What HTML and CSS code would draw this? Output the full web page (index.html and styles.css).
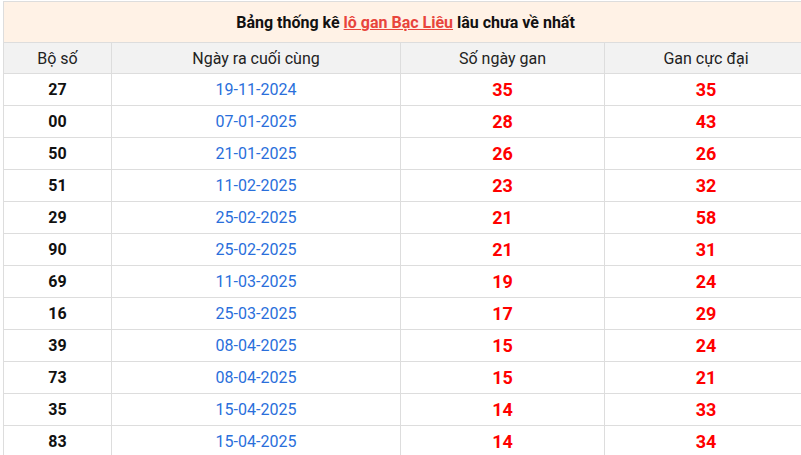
FILE: index.html
```html
<!DOCTYPE html>
<html lang="vi">
<head>
<meta charset="utf-8">
<link rel="stylesheet" href="styles.css">
</head>
<body>
<div class="wrap">
<table class="gan">
  <colgroup>
    <col class="c1"><col class="c2"><col class="c3"><col class="c4">
  </colgroup>
  <thead>
    <tr><th colspan="4" class="title">Bảng thống kê <a href="#" class="lnk">lô gan Bạc Liêu</a> lâu chưa về nhất</th></tr>
    <tr class="head"><th>Bộ số</th><th>Ngày ra cuối cùng</th><th>Số ngày gan</th><th>Gan cực đại</th></tr>
  </thead>
  <tbody>
    <tr><td class="num">27</td><td class="date">19-11-2024</td><td class="red">35</td><td class="red">35</td></tr>
    <tr><td class="num">00</td><td class="date">07-01-2025</td><td class="red">28</td><td class="red">43</td></tr>
    <tr><td class="num">50</td><td class="date">21-01-2025</td><td class="red">26</td><td class="red">26</td></tr>
    <tr><td class="num">51</td><td class="date">11-02-2025</td><td class="red">23</td><td class="red">32</td></tr>
    <tr><td class="num">29</td><td class="date">25-02-2025</td><td class="red">21</td><td class="red">58</td></tr>
    <tr><td class="num">90</td><td class="date">25-02-2025</td><td class="red">21</td><td class="red">31</td></tr>
    <tr><td class="num">69</td><td class="date">11-03-2025</td><td class="red">19</td><td class="red">24</td></tr>
    <tr><td class="num">16</td><td class="date">25-03-2025</td><td class="red">17</td><td class="red">29</td></tr>
    <tr><td class="num">39</td><td class="date">08-04-2025</td><td class="red">15</td><td class="red">24</td></tr>
    <tr><td class="num">73</td><td class="date">08-04-2025</td><td class="red">15</td><td class="red">21</td></tr>
    <tr><td class="num">35</td><td class="date">15-04-2025</td><td class="red">14</td><td class="red">33</td></tr>
    <tr><td class="num">83</td><td class="date">15-04-2025</td><td class="red">14</td><td class="red">34</td></tr>
  </tbody>
</table>
</div>
</body>
</html>
```
FILE: styles.css
```css
html, body {
  margin: 0;
  padding: 0;
  background: #fff;
  overflow: hidden;
}
.wrap {
  width: 801px;
  height: 455px;
  overflow: hidden;
  padding: 1px 0 0 3px;
  box-sizing: border-box;
}
.gan {
  width: 804px;
  border-collapse: collapse;
  table-layout: fixed;
  font-family: Roboto, "Liberation Sans", sans-serif;
  color: #222;
}
.c1 { width: 108px; }
.c2 { width: 289px; }
.c3 { width: 204px; }
.c4 { width: 203px; }
.gan th, .gan td {
  border: 1px solid #ddd;
  text-align: center;
  padding: 0;
}
.title {
  background: #fff2e6;
  height: 40px;
  font-size: 16px;
  font-weight: 700;
  color: #111;
}
.lnk {
  color: #e8453c;
  text-decoration: underline;
}
.head th {
  background: #f2f2f2;
  height: 30px;
  font-size: 16px;
  font-weight: 400;
  color: #222;
}
.gan td {
  height: 31px;
}
.num {
  font-size: 16px;
  font-weight: 700;
  color: #111;
}
.date {
  font-size: 16px;
  color: #2a6fdb;
}
.red {
  font-size: 18px;
  font-weight: 700;
  color: #ff0000;
}
```
